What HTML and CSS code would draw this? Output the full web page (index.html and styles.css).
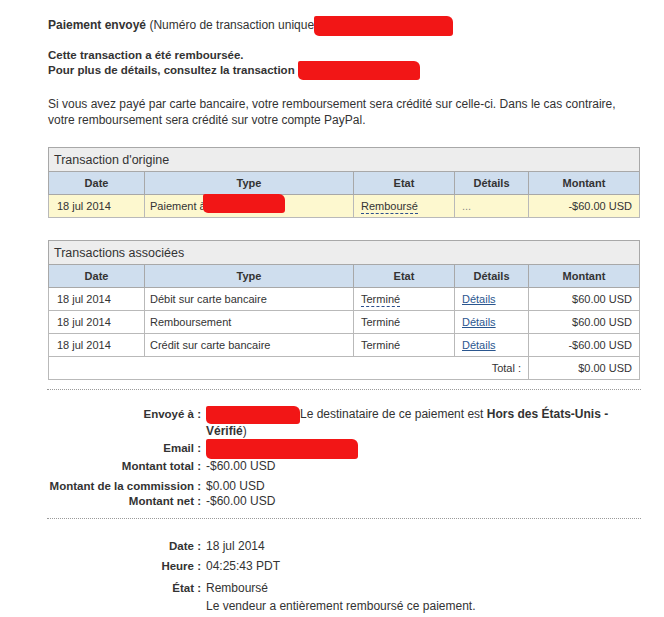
FILE: index.html
```html
<!DOCTYPE html>
<html lang="fr">
<head>
  <meta charset="UTF-8" />
  <meta name="viewport" content="width=device-width, initial-scale=1.0"/>
  <title>Détails de la transaction</title>
  <link rel="stylesheet" href="styles.css">
</head>
<body>
  <div class="page">
    <p class="sent"><b>Paiement envoyé</b> (Numéro de transaction unique<span class="redact r-id"></span></p>

    <p class="refunded">Cette transaction a été remboursée.<br>Pour plus de détails, consultez la transaction <span class="redact r-ref"></span></p>

    <p class="note">Si vous avez payé par carte bancaire, votre remboursement sera crédité sur celle-ci. Dans le cas contraire, votre remboursement sera crédité sur votre compte PayPal.</p>

    <table class="txn">
      <colgroup>
        <col class="c-date"><col class="c-type"><col class="c-state"><col class="c-details"><col class="c-amount">
      </colgroup>
      <tr class="title"><td colspan="5">Transaction d'origine</td></tr>
      <tr class="head"><th>Date</th><th>Type</th><th>Etat</th><th>Détails</th><th>Montant</th></tr>
      <tr class="origin">
        <td>18 jul 2014</td>
        <td>Paiement à<span class="redact r-payee"></span></td>
        <td><span class="status">Remboursé</span></td>
        <td class="muted">...</td>
        <td class="amount">-$60.00 USD</td>
      </tr>
    </table>

    <table class="txn">
      <colgroup>
        <col class="c-date"><col class="c-type"><col class="c-state"><col class="c-details"><col class="c-amount">
      </colgroup>
      <tr class="title"><td colspan="5">Transactions associées</td></tr>
      <tr class="head"><th>Date</th><th>Type</th><th>Etat</th><th>Détails</th><th>Montant</th></tr>
      <tr>
        <td>18 jul 2014</td>
        <td>Débit sur carte bancaire</td>
        <td><span class="status">Terminé</span></td>
        <td><a href="#">Détails</a></td>
        <td class="amount">$60.00 USD</td>
      </tr>
      <tr>
        <td>18 jul 2014</td>
        <td>Remboursement</td>
        <td>Terminé</td>
        <td><a href="#">Détails</a></td>
        <td class="amount">$60.00 USD</td>
      </tr>
      <tr>
        <td>18 jul 2014</td>
        <td>Crédit sur carte bancaire</td>
        <td>Terminé</td>
        <td><a href="#">Détails</a></td>
        <td class="amount">-$60.00 USD</td>
      </tr>
      <tr class="total">
        <td colspan="4">Total :</td>
        <td class="amount">$0.00 USD</td>
      </tr>
    </table>

    <hr class="dots">

    <dl class="info">
      <dt class="to">Envoyé à :</dt>
      <dd class="to"><span class="redact r-to"></span>Le destinataire de ce paiement est <b>Hors des États-Unis - Vérifié</b>)</dd>
      <dt>Email :</dt>
      <dd><span class="redact r-mail"></span></dd>
      <dt class="sum">Montant total :</dt>
      <dd class="sum">-$60.00 USD</dd>
      <dt class="fee">Montant de la commission :</dt>
      <dd class="fee">$0.00 USD</dd>
      <dt class="net">Montant net :</dt>
      <dd class="net">-$60.00 USD</dd>
    </dl>

    <hr class="dots">

    <dl class="info when">
      <dt>Date :</dt>
      <dd>18 jul 2014</dd>
      <dt>Heure :</dt>
      <dd>04:25:43 PDT</dd>
      <dt class="state">État :</dt>
      <dd class="state">Remboursé<br>Le vendeur a entièrement remboursé ce paiement.</dd>
    </dl>
  </div>
</body>
</html>
```

FILE: styles.css
```css
body {
  margin: 0;
  font-family: "Liberation Sans", Arial, sans-serif;
  font-size: 12px;
  color: #333;
  background: #fff;
}
.page {
  width: 594px;
  padding: 17px 0 0 48px;
}
p {
  margin: 0;
  line-height: 16px;
}
.refunded {
  margin-top: 15px;
  font-size: 11.5px;
  font-weight: bold;
  line-height: 15px;
}
.note {
  margin-top: 18px;
  width: 585px;
}

/* red marks over hidden data */
.redact {
  display: inline-block;
  vertical-align: middle;
  margin: -6px 0;
  background: #f21616;
  border-radius: 2px 6px 3px 5px;
}
.r-id { width: 139px; height: 20px; }
.r-ref { width: 122px; height: 19px; }
.r-payee { width: 82px; height: 19px; margin: -10px 0 -2px -3px; }
.r-to { width: 94px; height: 18px; }
.r-mail { width: 152px; height: 20px; }

/* tables */
.txn {
  width: 592px;
  margin-top: 19px;
  border-collapse: collapse;
  border: 1px solid #a8a8a8;
  font-size: 11px;
}
.txn + .txn {
  margin-top: 22px;
}
.c-date { width: 96px; }
.c-type { width: 209px; }
.c-state { width: 101px; }
.c-details { width: 74px; }
.c-amount { width: 111px; }
.txn td, .txn th {
  height: 14px;
  padding: 4px 7px;
  line-height: 14px;
  border: 1px solid #b9b9b9;
  text-align: left;
  white-space: nowrap;
}
.txn td:first-child {
  padding-left: 8px;
}
.txn td:nth-child(2) {
  padding-left: 5px;
}
.txn .title td {
  height: 15px;
  padding: 4px 5px;
  font-size: 12.5px;
  background: #ededed;
  border: 1px solid #a8a8a8;
}
.txn th {
  background: #cfdeee;
  text-align: center;
  font-weight: bold;
  border-color: #a8a8a8;
}
.origin td {
  background: #fdf8cf;
}
.txn .amount {
  text-align: right;
}
.txn .total td {
  text-align: right;
}
.status {
  border-bottom: 1px dashed #2b4f8c;
  padding-bottom: 1px;
}
.muted {
  color: #888;
}
.txn a {
  color: #2a568f;
  text-decoration: underline;
}

hr.dots {
  width: 594px;
  margin: 9px 0 0 -1px;
  border: 0;
  border-top: 1px dotted #9a9a9a;
}

/* label / value lists */
.info {
  display: grid;
  grid-template-columns: 153px 412px;
  column-gap: 5px;
  margin: 16px 0 0;
  font-size: 11.5px;
  line-height: 16px;
}
.info dt {
  text-align: right;
  font-weight: bold;
}
.info dd {
  margin: 0;
  font-size: 12px;
}
.info .to {
  line-height: 17px;
}
.info .sum {
  margin-top: 2px;
}
.info .fee {
  margin-top: 4px;
}
.info .net {
  margin-top: -1px;
}
.when {
  margin-top: 19px;
  row-gap: 4px;
}
.when .state {
  margin-top: 1px;
  line-height: 18px;
}
```
